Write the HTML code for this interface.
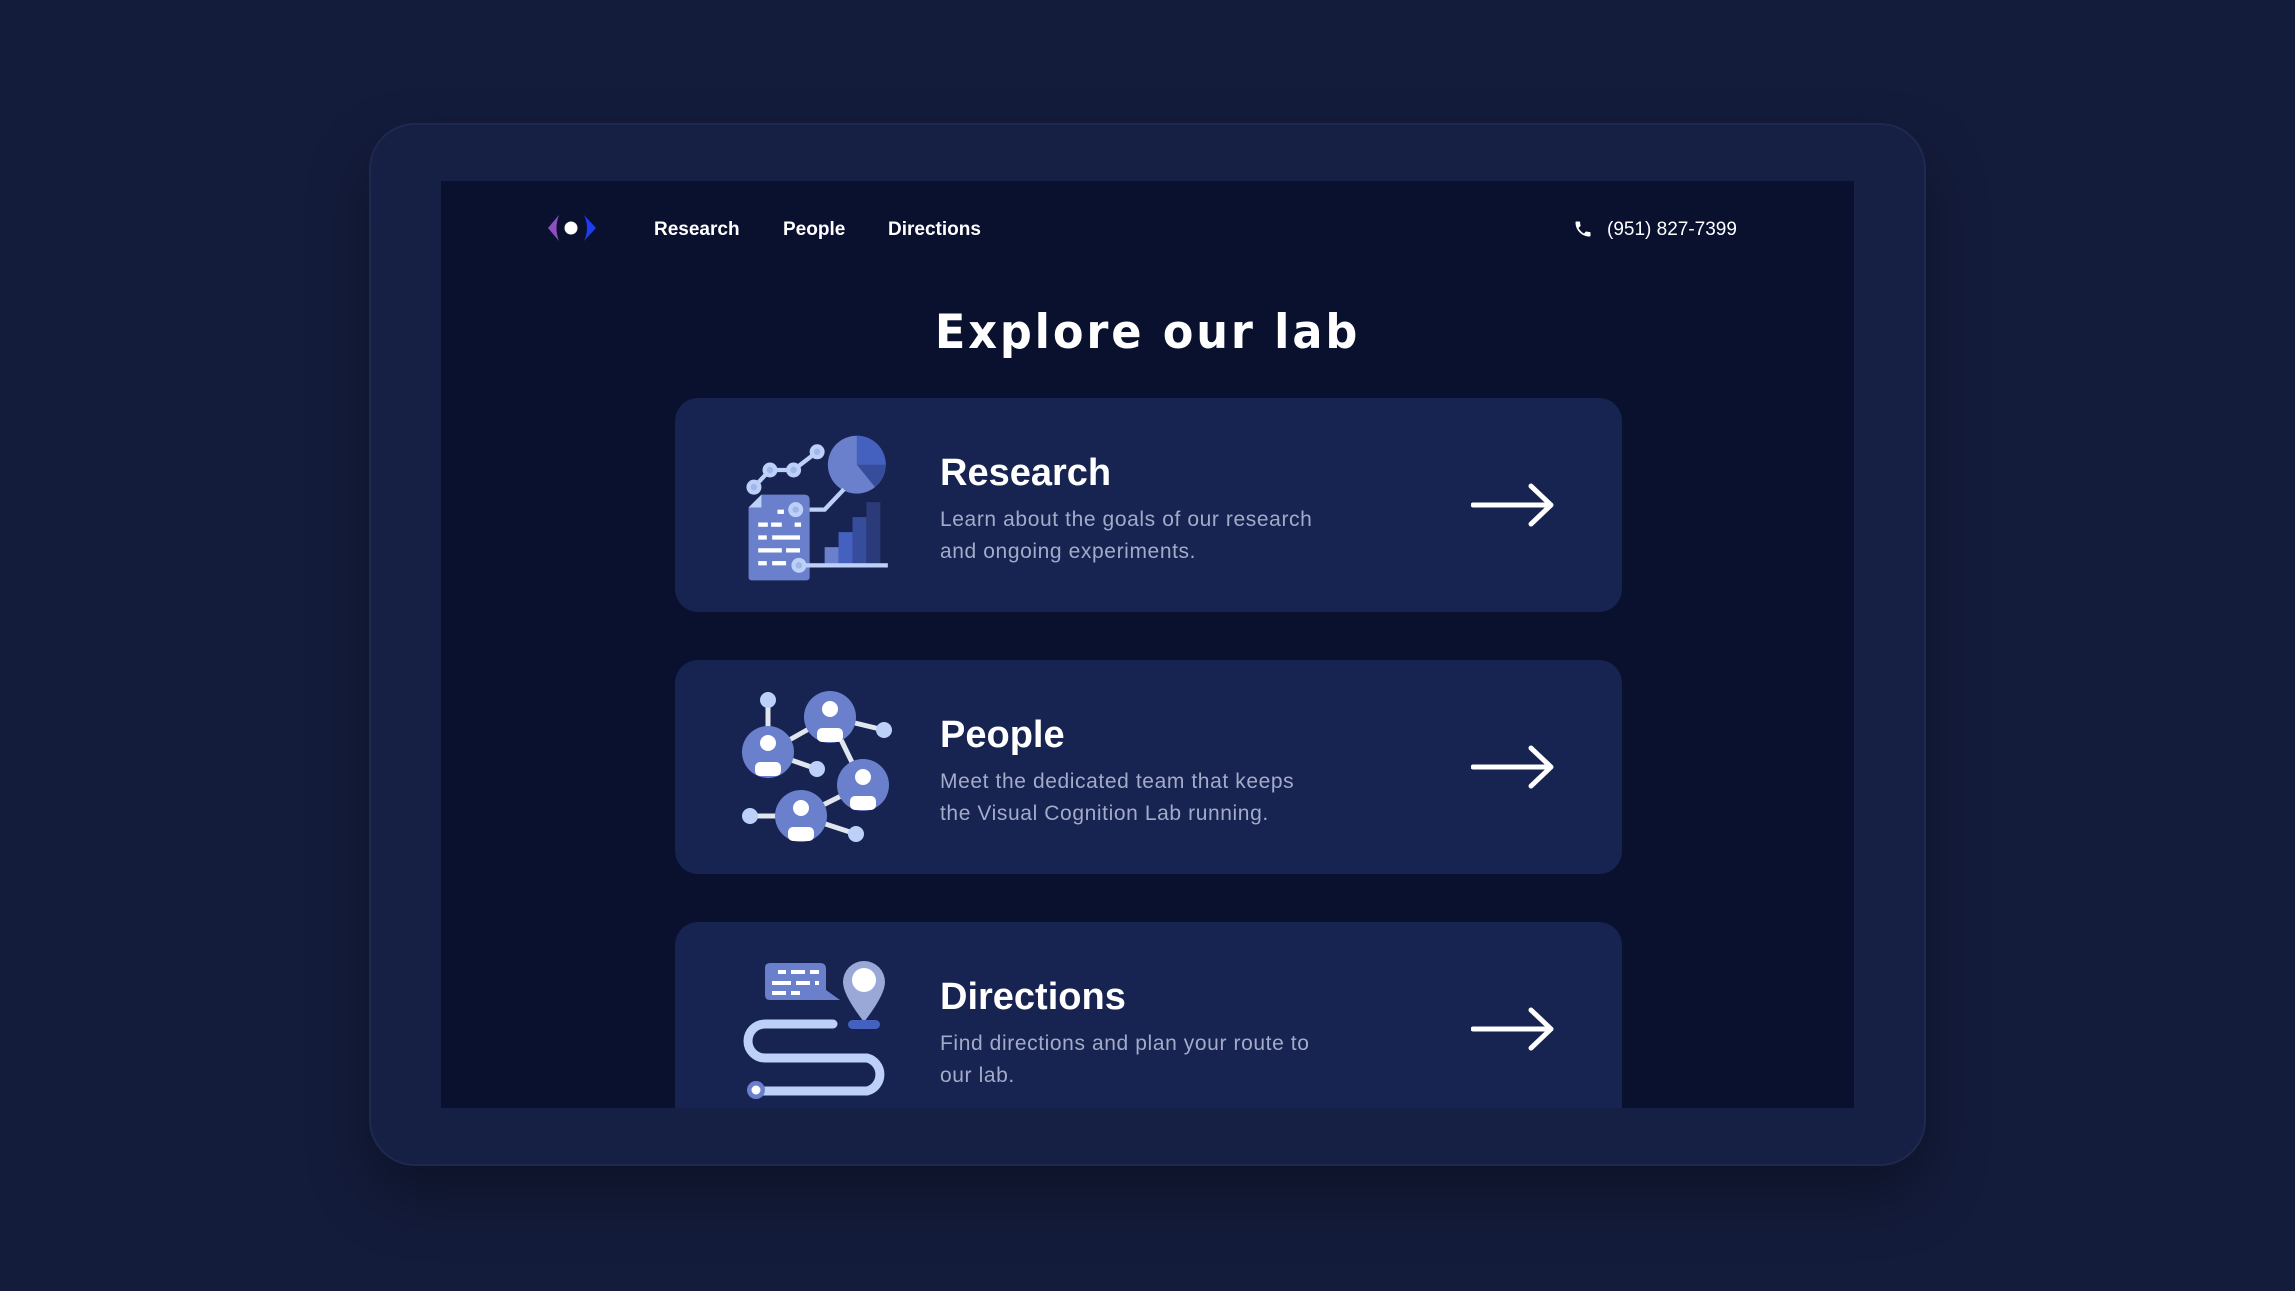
<!DOCTYPE html>
<html><head><meta charset="utf-8"><style>
*{margin:0;padding:0;box-sizing:border-box}
body{width:2295px;height:1291px;background:#141c3c;position:relative;overflow:hidden;font-family:"Liberation Sans",sans-serif}
.frame{position:absolute;left:369px;top:123px;width:1557px;height:1043px;border-radius:46px;background:#161f44;box-shadow:0 0 0 2px #1f2950 inset,0 30px 60px rgba(0,0,0,.35)}
.screen{position:absolute;left:441px;top:181px;width:1413px;height:927px;background:#09112f;overflow:hidden}
.nav{position:absolute;top:216px;color:#fff;font-weight:bold;font-size:19px}
.card{position:absolute;left:234px;width:947px;height:214px;border-radius:23px;background:#172350}
.card h2{position:absolute;left:265px;top:54px;color:#fff;font-size:38px;font-weight:bold}
.card p{position:absolute;left:265px;top:106px;color:#a3abc9;font-size:21px;line-height:32px;width:390px;letter-spacing:0.6px}
.arrow{position:absolute;left:796px;top:82px}
</style></head><body>
<div class="frame"></div>
<div class="screen">
<svg style="position:absolute;left:105px;top:32px" width="52" height="30" viewBox="0 0 52 30">
<path d="M13 2 L2 15 L13 28 Q8 15 13 2Z" fill="#8e4fc0"/>
<path d="M38 2 L50 15 L38 28 Q44 15 38 2Z" fill="#1f3df0"/>
<circle cx="25" cy="15" r="6.5" fill="#fff"/>
</svg>
<div class="nav" style="left:213px;top:38px">Research</div>
<div class="nav" style="left:342px;top:38px">People</div>
<div class="nav" style="left:447px;top:38px">Directions</div>
<svg style="position:absolute;left:1132px;top:38px" width="20" height="20" viewBox="0 0 24 24"><path fill="#fff" d="M6.6 10.8c1.4 2.8 3.8 5.1 6.6 6.6l2.2-2.2c.3-.3.7-.4 1-.2 1.1.4 2.3.6 3.6.6.6 0 1 .4 1 1V20c0 .6-.4 1-1 1C10.6 21 3 13.4 3 4c0-.6.4-1 1-1h3.5c.6 0 1 .4 1 1 0 1.3.2 2.5.6 3.6.1.3 0 .7-.2 1L6.6 10.8z"/></svg>
<div style="position:absolute;left:1166px;top:38px;color:#fff;font-size:19px">(951) 827-7399</div>
<div style="position:absolute;left:0;width:1413px;text-align:center;top:124px;color:#fff;font-size:47px;font-weight:bold;letter-spacing:3px;font-family:'DejaVu Sans',sans-serif;transform:scaleX(.95)">Explore our lab</div>

<div class="card" style="top:217px"><h2>Research</h2><p>Learn about the goals of our research and ongoing experiments.</p>
<svg class="arrow" width="90" height="50" viewBox="0 0 90 50"><path d="M2 25H80M60 6L80 25L60 44" stroke="#fff" stroke-width="5" fill="none" stroke-linecap="round" stroke-linejoin="round"/></svg></div>
<div class="card" style="top:479px"><h2>People</h2><p>Meet the dedicated team that keeps the Visual Cognition Lab running.</p>
<svg class="arrow" width="90" height="50" viewBox="0 0 90 50"><path d="M2 25H80M60 6L80 25L60 44" stroke="#fff" stroke-width="5" fill="none" stroke-linecap="round" stroke-linejoin="round"/></svg></div>
<div class="card" style="top:741px"><h2>Directions</h2><p>Find directions and plan your route to our lab.</p>
<svg class="arrow" width="90" height="50" viewBox="0 0 90 50"><path d="M2 25H80M60 6L80 25L60 44" stroke="#fff" stroke-width="5" fill="none" stroke-linecap="round" stroke-linejoin="round"/></svg></div>

<svg style="position:absolute;left:-441px;top:-181px" width="2295" height="1291">
<!-- research -->
<g transform="translate(680,395) scale(1.0714) translate(-680,-400)">
<polyline points="749,486 764,470 786,470 808,453" stroke="#bcd0f8" stroke-width="4" fill="none"/>
<circle cx="749" cy="486" r="7" fill="#bcd0f8"/><circle cx="764" cy="470" r="7" fill="#bcd0f8"/><circle cx="786" cy="470" r="7" fill="#bcd0f8"/><circle cx="808" cy="453" r="7" fill="#bcd0f8"/>
<circle cx="749" cy="486" r="3" fill="#9fb6ea"/><circle cx="764" cy="470" r="3" fill="#9fb6ea"/><circle cx="786" cy="470" r="3" fill="#9fb6ea"/><circle cx="808" cy="453" r="3" fill="#9fb6ea"/>
<circle cx="845" cy="465" r="27" fill="#6a80cc"/>
<path d="M845 465 V438 A27 27 0 0 1 872 465Z" fill="#4461c0"/>
<path d="M845 465 H872 A27 27 0 0 1 862 486Z" fill="#364d9c"/>
<polyline points="788,507 815,507 833,488" stroke="#bcd0f8" stroke-width="4" fill="none"/>
<path d="M756 493 H796 Q801 493 801 498 V570 Q801 573 798 573 H747 Q744 573 744 570 V505Z" fill="#6a80cc"/>
<path d="M744 505 L756 493 V505Z" fill="#bcd0f8"/>
<g fill="#fff"><rect x="771" y="507" width="6" height="4"/><rect x="753" y="519" width="9" height="4"/><rect x="765" y="519" width="10" height="4"/><rect x="787" y="519" width="6" height="4"/><rect x="753" y="531" width="8" height="4"/><rect x="766" y="531" width="26" height="4"/><rect x="753" y="543" width="22" height="4"/><rect x="779" y="543" width="13" height="4"/><rect x="753" y="555" width="8" height="4"/><rect x="766" y="555" width="13" height="4"/></g>
<rect x="815" y="542" width="13" height="17" fill="#6a80cc"/><rect x="828" y="528" width="13" height="31" fill="#4461c0"/><rect x="841" y="514" width="13" height="45" fill="#364d9c"/><rect x="854" y="500" width="13" height="59" fill="#2b3a78"/>
<rect x="788" y="557" width="86" height="4" fill="#bcd0f8"/>
<circle cx="788" cy="507" r="7" fill="#bcd0f8"/><circle cx="791" cy="559" r="7" fill="#bcd0f8"/>
<circle cx="788" cy="507" r="3" fill="#9fb6ea"/><circle cx="791" cy="559" r="3" fill="#9fb6ea"/>
</g>
<!-- people -->
<g stroke="#e0e6ee" stroke-width="5">
<line x1="768" y1="700" x2="768" y2="752"/><line x1="768" y1="752" x2="830" y2="717"/><line x1="768" y1="752" x2="817" y2="769"/><line x1="830" y1="717" x2="884" y2="730"/><line x1="830" y1="717" x2="863" y2="785"/><line x1="863" y1="785" x2="801" y2="816"/><line x1="750" y1="816" x2="801" y2="816"/><line x1="801" y1="816" x2="856" y2="834"/>
</g>
<g fill="#bcd0f8"><circle cx="768" cy="700" r="8"/><circle cx="884" cy="730" r="8"/><circle cx="817" cy="769" r="8"/><circle cx="750" cy="816" r="8"/><circle cx="856" cy="834" r="8"/></g>
<g fill="#6a80cc"><circle cx="768" cy="752" r="26"/><circle cx="830" cy="717" r="26"/><circle cx="863" cy="785" r="26"/><circle cx="801" cy="816" r="26"/></g>
<g fill="#fff">
<circle cx="768" cy="743" r="8"/><rect x="755" y="762" width="26" height="14" rx="5"/>
<circle cx="830" cy="709" r="8"/><rect x="817" y="728" width="26" height="14" rx="5"/>
<circle cx="863" cy="777" r="8"/><rect x="850" y="796" width="26" height="14" rx="5"/>
<circle cx="801" cy="808" r="8"/><rect x="788" y="827" width="26" height="14" rx="5"/>
</g>
<!-- directions -->
<g>
<path d="M770 963 H820 Q826 963 826 969 V990 L840 1000 H770 Q765 1000 765 995 V968 Q765 963 770 963Z" fill="#6a80cc"/>
<g fill="#fff"><rect x="778" y="970" width="8" height="4"/><rect x="791" y="970" width="14" height="4"/><rect x="810" y="970" width="9" height="4"/><rect x="772" y="981" width="19" height="4"/><rect x="796" y="981" width="14" height="4"/><rect x="815" y="981" width="4" height="4"/><rect x="772" y="991" width="14" height="4"/><rect x="791" y="991" width="9" height="4"/></g>
<path d="M864 961 A21 21 0 0 1 885 982 Q885 995 864 1022 Q843 995 843 982 A21 21 0 0 1 864 961Z" fill="#9aa8d8"/>
<circle cx="864" cy="980" r="12" fill="#fff"/>
<rect x="848" y="1020" width="32" height="9" rx="4.5" fill="#4461c0"/>
<path d="M833 1024 H765 A17 17 0 0 0 765 1058 H867 A17 17 0 0 1 867 1091 H756" stroke="#bcd0f8" stroke-width="9" fill="none" stroke-linecap="round"/>
<circle cx="756" cy="1090" r="9" fill="#6a80cc"/><circle cx="756" cy="1090" r="4.5" fill="#fff"/>
</g>
</svg>
</div>
</body></html>
